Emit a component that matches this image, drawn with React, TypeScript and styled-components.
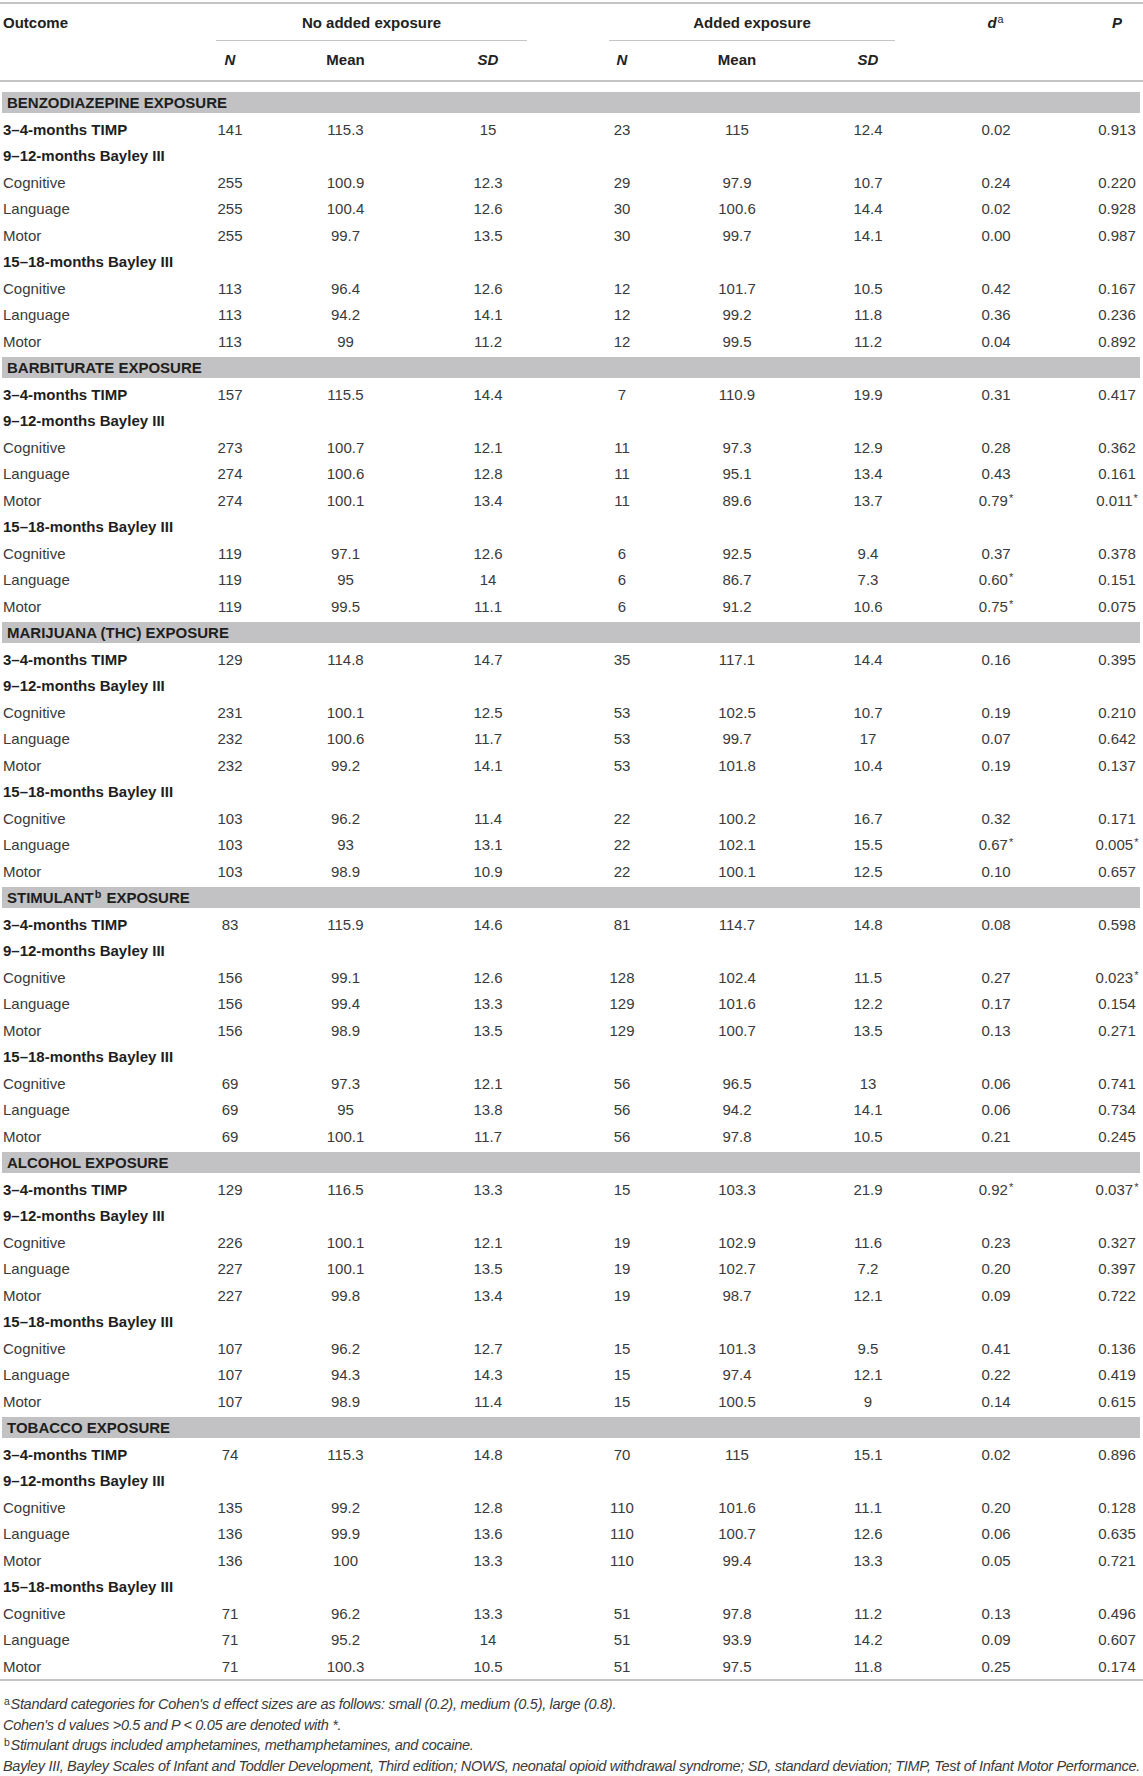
import React from "react";
import styled, { createGlobalStyle } from "styled-components";

const GlobalStyle = createGlobalStyle`
  html, body { margin: 0; padding: 0; background: #ffffff; }
  body { font-family: "Liberation Sans", Arial, Helvetica, sans-serif; color: #3a3a3a; }
`;

const COLS = "172px 116px 115px 170px 98px 132px 130px 126px 84px";
const LINE = "#c4c4c4";

const Table = styled.div`
  width: 1143px;
  margin-top: 2px;
  border-top: 2px solid ${LINE};
  font-size: 15px;
`;

const Head = styled.div`
  display: grid;
  grid-template-columns: ${COLS};
  grid-template-rows: 37px 39px;
  border-bottom: 2px solid ${LINE};
  font-weight: bold;
  color: #222222;
`;

const HeadCell = styled.div<{
  $col: number;
  $row: number;
  $span?: number;
  $italic?: boolean;
  $left?: boolean;
  $last?: boolean;
}>`
  grid-column: ${(p) => p.$col} / span ${(p) => p.$span ?? 1};
  grid-row: ${(p) => p.$row};
  display: flex;
  align-items: center;
  justify-content: ${(p) => (p.$left ? "flex-start" : "center")};
  padding-left: ${(p) => (p.$left ? "3px" : p.$last ? "32px" : "0")};
  padding-bottom: ${(p) => (p.$row === 2 ? "3px" : "0")};
  font-style: ${(p) => (p.$italic ? "italic" : "normal")};
`;

const GroupHead = styled.div<{ $col: number; $ml: number; $mr: number }>`
  grid-column: ${(p) => p.$col} / span 3;
  grid-row: 1;
  margin: 0 ${(p) => p.$mr}px 0 ${(p) => p.$ml}px;
  border-bottom: 1px solid ${LINE};
  display: flex;
  align-items: center;
  justify-content: center;
`;

const Sup = styled.sup<{ $light?: boolean }>`
  font-size: 0.72em;
  line-height: 0;
  vertical-align: 0.45em;
  margin: 0 1px;
  font-weight: ${(p) => (p.$light ? "normal" : "inherit")};
  font-style: normal;
`;

const Sections = styled.div`
  padding-top: 7.25px;
`;

const Band = styled.div`
  height: 21.5px;
  margin: 2.5px 3px 2.5px 2px;
  padding-left: 5px;
  background: #c2c2c4;
  display: flex;
  align-items: center;
  font-weight: bold;
  color: #1e1e1e;
`;

const BandText = styled.span`
  white-space: nowrap;
`;

const Row = styled.div`
  display: grid;
  grid-template-columns: ${COLS};
  height: 26.5px;
  align-items: center;
`;

const Label = styled.div<{ $bold?: boolean; $full?: boolean }>`
  grid-column: ${(p) => (p.$full ? "1 / -1" : "1")};
  padding-left: 3px;
  white-space: nowrap;
  font-weight: ${(p) => (p.$bold ? "bold" : "normal")};
  color: ${(p) => (p.$bold ? "#1e1e1e" : "#3a3a3a")};
`;

const Val = styled.div<{ $last?: boolean }>`
  text-align: center;
  white-space: nowrap;
  padding-left: ${(p) => (p.$last ? "32px" : "0")};
  color: #3a3a3a;
`;

const Star = styled.span`
  font-size: 11px;
  vertical-align: 4px;
  line-height: 0;
  margin-left: 1px;
`;

const Notes = styled.div`
  border-top: 2px solid ${LINE};
  padding: 13px 0 0 3px;
  font-style: italic;
  font-size: 14.5px;
  line-height: 20.5px;
  letter-spacing: -0.3px;
  white-space: nowrap;
  color: #3a3a3a;
`;

const NoteLine = styled.div``;

type R = [string, string, string, string, string, string, string, string];

interface Section {
  name: React.ReactNode;
  timp: R;
  b912: [R, R, R];
  b1518: [R, R, R];
}

const sections: Section[] = [
  {
    name: "BENZODIAZEPINE EXPOSURE",
    timp: ["141", "115.3", "15", "23", "115", "12.4", "0.02", "0.913"],
    b912: [
      ["255", "100.9", "12.3", "29", "97.9", "10.7", "0.24", "0.220"],
      ["255", "100.4", "12.6", "30", "100.6", "14.4", "0.02", "0.928"],
      ["255", "99.7", "13.5", "30", "99.7", "14.1", "0.00", "0.987"],
    ],
    b1518: [
      ["113", "96.4", "12.6", "12", "101.7", "10.5", "0.42", "0.167"],
      ["113", "94.2", "14.1", "12", "99.2", "11.8", "0.36", "0.236"],
      ["113", "99", "11.2", "12", "99.5", "11.2", "0.04", "0.892"],
    ],
  },
  {
    name: "BARBITURATE EXPOSURE",
    timp: ["157", "115.5", "14.4", "7", "110.9", "19.9", "0.31", "0.417"],
    b912: [
      ["273", "100.7", "12.1", "11", "97.3", "12.9", "0.28", "0.362"],
      ["274", "100.6", "12.8", "11", "95.1", "13.4", "0.43", "0.161"],
      ["274", "100.1", "13.4", "11", "89.6", "13.7", "0.79*", "0.011*"],
    ],
    b1518: [
      ["119", "97.1", "12.6", "6", "92.5", "9.4", "0.37", "0.378"],
      ["119", "95", "14", "6", "86.7", "7.3", "0.60*", "0.151"],
      ["119", "99.5", "11.1", "6", "91.2", "10.6", "0.75*", "0.075"],
    ],
  },
  {
    name: "MARIJUANA (THC) EXPOSURE",
    timp: ["129", "114.8", "14.7", "35", "117.1", "14.4", "0.16", "0.395"],
    b912: [
      ["231", "100.1", "12.5", "53", "102.5", "10.7", "0.19", "0.210"],
      ["232", "100.6", "11.7", "53", "99.7", "17", "0.07", "0.642"],
      ["232", "99.2", "14.1", "53", "101.8", "10.4", "0.19", "0.137"],
    ],
    b1518: [
      ["103", "96.2", "11.4", "22", "100.2", "16.7", "0.32", "0.171"],
      ["103", "93", "13.1", "22", "102.1", "15.5", "0.67*", "0.005*"],
      ["103", "98.9", "10.9", "22", "100.1", "12.5", "0.10", "0.657"],
    ],
  },
  {
    name: (
      <>
        STIMULANT<Sup>b</Sup>{" "}EXPOSURE
      </>
    ),
    timp: ["83", "115.9", "14.6", "81", "114.7", "14.8", "0.08", "0.598"],
    b912: [
      ["156", "99.1", "12.6", "128", "102.4", "11.5", "0.27", "0.023*"],
      ["156", "99.4", "13.3", "129", "101.6", "12.2", "0.17", "0.154"],
      ["156", "98.9", "13.5", "129", "100.7", "13.5", "0.13", "0.271"],
    ],
    b1518: [
      ["69", "97.3", "12.1", "56", "96.5", "13", "0.06", "0.741"],
      ["69", "95", "13.8", "56", "94.2", "14.1", "0.06", "0.734"],
      ["69", "100.1", "11.7", "56", "97.8", "10.5", "0.21", "0.245"],
    ],
  },
  {
    name: "ALCOHOL EXPOSURE",
    timp: ["129", "116.5", "13.3", "15", "103.3", "21.9", "0.92*", "0.037*"],
    b912: [
      ["226", "100.1", "12.1", "19", "102.9", "11.6", "0.23", "0.327"],
      ["227", "100.1", "13.5", "19", "102.7", "7.2", "0.20", "0.397"],
      ["227", "99.8", "13.4", "19", "98.7", "12.1", "0.09", "0.722"],
    ],
    b1518: [
      ["107", "96.2", "12.7", "15", "101.3", "9.5", "0.41", "0.136"],
      ["107", "94.3", "14.3", "15", "97.4", "12.1", "0.22", "0.419"],
      ["107", "98.9", "11.4", "15", "100.5", "9", "0.14", "0.615"],
    ],
  },
  {
    name: "TOBACCO EXPOSURE",
    timp: ["74", "115.3", "14.8", "70", "115", "15.1", "0.02", "0.896"],
    b912: [
      ["135", "99.2", "12.8", "110", "101.6", "11.1", "0.20", "0.128"],
      ["136", "99.9", "13.6", "110", "100.7", "12.6", "0.06", "0.635"],
      ["136", "100", "13.3", "110", "99.4", "13.3", "0.05", "0.721"],
    ],
    b1518: [
      ["71", "96.2", "13.3", "51", "97.8", "11.2", "0.13", "0.496"],
      ["71", "95.2", "14", "51", "93.9", "14.2", "0.09", "0.607"],
      ["71", "100.3", "10.5", "51", "97.5", "11.8", "0.25", "0.174"],
    ],
  },
];

const measures = ["Cognitive", "Language", "Motor"];

function Value({ v, last }: { v: string; last?: boolean }) {
  const star = v.endsWith("*");
  return (
    <Val $last={last}>
      {star ? v.slice(0, -1) : v}
      {star && <Star>*</Star>}
    </Val>
  );
}

function DataRow({ label, values, bold }: { label: string; values: R; bold?: boolean }) {
  return (
    <Row>
      <Label $bold={bold}>{label}</Label>
      {values.map((v, i) => (
        <Value key={i} v={v} last={i === values.length - 1} />
      ))}
    </Row>
  );
}

function SubHead({ children }: { children: React.ReactNode }) {
  return (
    <Row>
      <Label $bold $full>
        {children}
      </Label>
    </Row>
  );
}

export default function App() {
  return (
    <>
      <GlobalStyle />
      <Table>
        <Head>
          <HeadCell $col={1} $row={1} $left>
            Outcome
          </HeadCell>
          <GroupHead $col={2} $ml={44} $mr={46}>
            No added exposure
          </GroupHead>
          <GroupHead $col={5} $ml={36} $mr={38}>
            Added exposure
          </GroupHead>
          <HeadCell $col={8} $row={1} $italic>
            <span>
              d<Sup $light>a</Sup>
            </span>
          </HeadCell>
          <HeadCell $col={9} $row={1} $italic $last>
            P
          </HeadCell>
          <HeadCell $col={2} $row={2} $italic>
            N
          </HeadCell>
          <HeadCell $col={3} $row={2}>
            Mean
          </HeadCell>
          <HeadCell $col={4} $row={2} $italic>
            SD
          </HeadCell>
          <HeadCell $col={5} $row={2} $italic>
            N
          </HeadCell>
          <HeadCell $col={6} $row={2}>
            Mean
          </HeadCell>
          <HeadCell $col={7} $row={2} $italic>
            SD
          </HeadCell>
        </Head>
        <Sections>
          {sections.map((s, si) => (
            <div key={si}>
              <Band>
                <BandText>{s.name}</BandText>
              </Band>
              <DataRow label="3–4-months TIMP" values={s.timp} bold />
              <SubHead>9–12-months Bayley III</SubHead>
              {s.b912.map((r, i) => (
                <DataRow key={i} label={measures[i]} values={r} />
              ))}
              <SubHead>15–18-months Bayley III</SubHead>
              {s.b1518.map((r, i) => (
                <DataRow key={i} label={measures[i]} values={r} />
              ))}
            </div>
          ))}
        </Sections>
        <Notes>
          <NoteLine>
            <Sup $light>a</Sup>Standard categories for Cohen's d effect sizes are as follows: small (0.2), medium (0.5), large (0.8).
          </NoteLine>
          <NoteLine>Cohen's d values &gt;0.5 and P &lt; 0.05 are denoted with *.</NoteLine>
          <NoteLine>
            <Sup $light>b</Sup>Stimulant drugs included amphetamines, methamphetamines, and cocaine.
          </NoteLine>
          <NoteLine>
            Bayley III, Bayley Scales of Infant and Toddler Development, Third edition; NOWS, neonatal opioid withdrawal syndrome; SD, standard deviation; TIMP, Test of Infant Motor Performance.
          </NoteLine>
        </Notes>
      </Table>
    </>
  );
}
